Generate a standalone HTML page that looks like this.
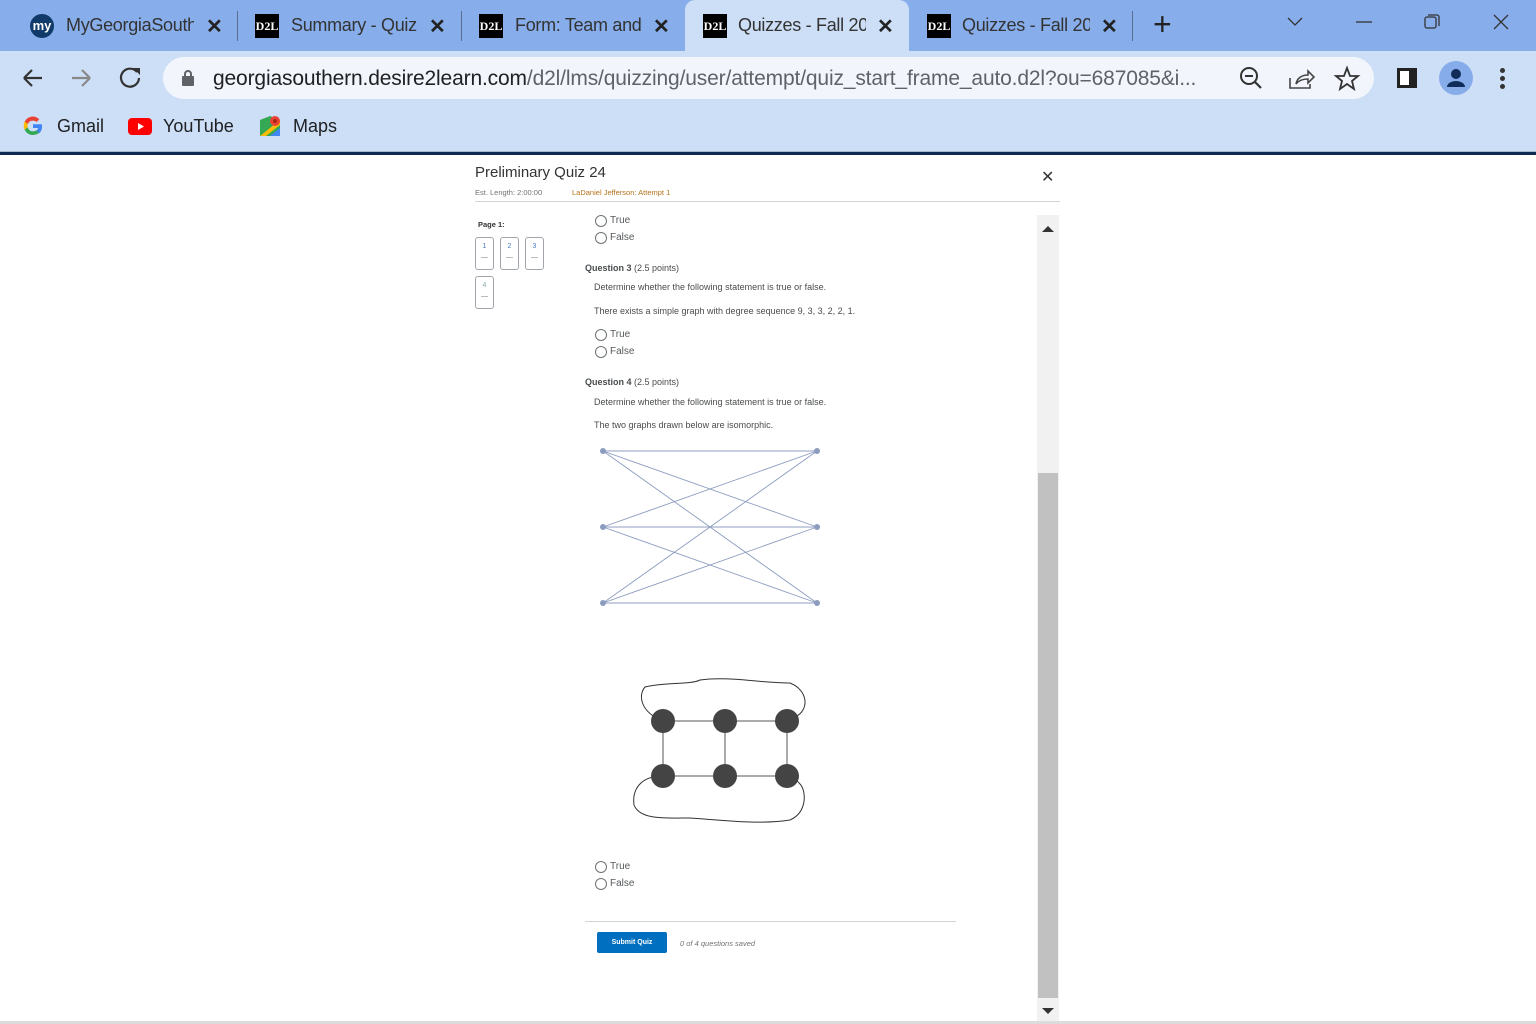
<!DOCTYPE html>
<html><head><meta charset="utf-8"><style>
*{margin:0;padding:0;box-sizing:border-box}
body{width:1536px;height:1024px;overflow:hidden;background:#fff;font-family:"Liberation Sans",sans-serif;position:relative}
.abs{position:absolute}
.tabbar{left:0;top:0;width:1536px;height:51px;background:#87adea}
.tab{position:absolute;top:0;height:51px;font-size:18px;color:#1f1f1f;display:flex;align-items:center}
.tab .t{position:absolute;left:56px;top:15px;width:128px;overflow:hidden;white-space:nowrap;color:#333;letter-spacing:-0.3px}
.tab .x{position:absolute;left:199px;top:14px;font-size:20px;font-weight:bold;color:#222}
.d2l{position:absolute;left:18px;top:14px;width:24px;height:24px;background:#000;color:#fff;font-family:"Liberation Serif",serif;font-weight:bold;font-size:12px;line-height:24px;text-align:center}
.sep{position:absolute;top:11px;width:1px;height:30px;background:#5a6f90}
.toolbar{left:0;top:51px;width:1536px;height:103px;background:#cddff6}
.omni{left:163px;top:57px;width:1211px;height:42px;border-radius:21px;background:#f2f6fc}
.url{left:213px;top:67px;font-size:21px;color:#202124;white-space:nowrap;letter-spacing:-0.15px}
.url span{color:#5f6368}
.bm{font-size:18px;color:#202124;top:116px}
.q{font-family:"Liberation Sans",sans-serif;color:#494c4e}
.radio{position:absolute;width:12px;height:12px;border:1px solid #6e7376;border-radius:50%}
.opt{position:absolute;font-size:10px;color:#565a5c}
.pg{position:absolute;width:19px;height:33px;border:1px solid #a0a6ac;border-radius:3px;font-size:7px;color:#4a7bc0;text-align:center;padding-top:5px}
.pg i{display:block;width:7px;height:1px;background:#bbb;margin:7px auto 0}
</style></head><body>
<div class="abs tabbar"></div>
<div class="tab" style="left:10px;width:225px">
 <div style="position:absolute;left:20px;top:14px;width:24px;height:24px;border-radius:50%;background:#0f3a6a;color:#fff;font-size:13px;font-weight:bold;text-align:center;line-height:23px">my</div>
 <div class="t" style="left:56px">MyGeorgiaSouth</div><div class="x" style="left:196px">✕</div></div>
<div class="sep" style="left:237px"></div>
<div class="tab" style="left:237px;width:225px"><div class="d2l">D2L</div><div class="t" style="left:54px">Summary - Quiz</div><div class="x" style="left:192px">✕</div></div>
<div class="sep" style="left:461px"></div>
<div class="tab" style="left:461px;width:225px"><div class="d2l">D2L</div><div class="t" style="left:54px">Form: Team and</div><div class="x" style="left:192px">✕</div></div>
<div class="tab" style="left:685px;width:224px;background:#cddff6;border-radius:10px 10px 0 0"><div class="d2l">D2L</div><div class="t" style="left:53px">Quizzes - Fall 20</div><div class="x" style="left:192px">✕</div></div>
<div class="tab" style="left:909px;width:225px"><div class="d2l">D2L</div><div class="t" style="left:53px">Quizzes - Fall 20</div><div class="x" style="left:192px">✕</div></div>
<div class="sep" style="left:1132px"></div>
<div class="abs" style="left:1153px;top:6px;font-size:32px;color:#222">+</div>
<svg class="abs" style="left:1280px;top:10px" width="240" height="30"><polyline points="8,8 15,15 22,8" fill="none" stroke="#333" stroke-width="1.3"/><line x1="76" y1="12" x2="92" y2="12" stroke="#333" stroke-width="1.3"/><rect x="145" y="7" width="11" height="11" rx="2" fill="none" stroke="#333" stroke-width="1.3"/><path d="M148 5h9a2 2 0 0 1 2 2v9" fill="none" stroke="#333" stroke-width="1.3"/><path d="M214 5l14 14M228 5l-14 14" stroke="#333" stroke-width="1.3"/></svg>
<div class="abs toolbar"></div>
<svg class="abs" style="left:20px;top:64px" width="130" height="28"><path d="M4 14h18M4 14l8-8M4 14l8 8" fill="none" stroke="#333" stroke-width="2.2"/><path d="M52 14h18M70 14l-8-8M70 14l-8 8" fill="none" stroke="#888" stroke-width="2.2"/><path d="M117 8a9 9 0 1 0 2 6" fill="none" stroke="#333" stroke-width="2.2"/><path d="M113 4h7v7z" fill="#333"/></svg>
<div class="abs omni"></div>
<svg class="abs" style="left:181px;top:69px" width="14" height="18"><rect x="1" y="7" width="12" height="10" rx="1" fill="#5f6368"/><path d="M4 8V5a3 3 0 0 1 6 0v3" fill="none" stroke="#5f6368" stroke-width="2"/></svg>
<div class="abs url">georgiasouthern.desire2learn.com<span>/d2l/lms/quizzing/user/attempt/quiz_start_frame_auto.d2l?ou=687085&amp;i...</span></div>
<svg class="abs" style="left:1238px;top:64px" width="130" height="30"><circle cx="11" cy="12" r="8" fill="none" stroke="#333" stroke-width="2"/><line x1="7" y1="12" x2="15" y2="12" stroke="#333" stroke-width="2"/><line x1="17" y1="18" x2="23" y2="24" stroke="#333" stroke-width="2.2"/><path d="M52 14v10h20v-4M58 20c1-6 6-9 12-9V7l6 6-6 6v-4c-5 0-9 1-12 5" fill="none" stroke="#444" stroke-width="1.6"/><path d="M109 4l3 8h8l-6 5 2 8-7-5-7 5 2-8-6-5h8z" fill="none" stroke="#333" stroke-width="1.8"/></svg>
<svg class="abs" style="left:1395px;top:66px" width="24" height="24"><rect x="2" y="2" width="20" height="20" fill="#222"/><rect x="5" y="5" width="9" height="14" fill="#fff"/></svg>
<div class="abs" style="left:1439px;top:61px;width:34px;height:34px;border-radius:50%;background:#86adea"></div>
<svg class="abs" style="left:1439px;top:61px" width="34" height="34"><circle cx="17" cy="13" r="5" fill="#0f2d58"/><path d="M8 26a9 6 0 0 1 18 0z" fill="#0f2d58"/></svg>
<div class="abs" style="left:1500px;top:68px;width:5px"><div style="width:5px;height:5px;border-radius:50%;background:#333;margin-bottom:3px"></div><div style="width:5px;height:5px;border-radius:50%;background:#333;margin-bottom:3px"></div><div style="width:5px;height:5px;border-radius:50%;background:#333"></div></div>
<svg class="abs" style="left:22px;top:115px" width="22" height="22" viewBox="0 0 22 22"><path d="M20 11.2c0-.7-.1-1.4-.2-2H11v3.8h5.1a4.4 4.4 0 0 1-1.9 2.9v2.4h3A9 9 0 0 0 20 11.2z" fill="#4285f4"/><path d="M11 20c2.5 0 4.6-.8 6.2-2.2l-3-2.4c-.8.6-1.900 1-3.200 1a5.6 5.6 0 0 1-5.2-3.900H2.7v2.500A9 9 0 0 0 11 20z" fill="#34a853"/><path d="M5.8 12.5a5.4 5.4 0 0 1 0-3.5V6.5H2.7a9 9 0 0 0 0 8.1z" fill="#fbbc05"/><path d="M11 5.6c1.4 0 2.6.5 3.6 1.4l2.7-2.7A9 9 0 0 0 2.7 6.5L5.8 9A5.4 5.4 0 0 1 11 5.6z" fill="#ea4335"/></svg>
<div class="abs bm" style="left:57px">Gmail</div>
<div class="abs" style="left:128px;top:118px;width:24px;height:17px;border-radius:4px;background:#f00"></div>
<svg class="abs" style="left:128px;top:118px" width="24" height="17"><path d="M10 5l6 3.5-6 3.5z" fill="#fff"/></svg>
<div class="abs bm" style="left:163px">YouTube</div>
<svg class="abs" style="left:258px;top:114px" width="24" height="24"><path d="M2 6l10-4 10 4v16H2z" fill="#34a853"/><path d="M2 22l20-16v5L8 22z" fill="#fbbc05"/><path d="M12 22l10-8v8z" fill="#4285f4"/><circle cx="17" cy="7" r="5" fill="#ea4335"/><circle cx="17" cy="7" r="2" fill="#a52714"/></svg>
<div class="abs bm" style="left:293px">Maps</div>
<div class="abs" style="left:0;top:152px;width:1536px;height:3px;background:#0e2a50"></div>
<div class="abs" style="left:0;top:151px;width:1536px;height:1px;background:#a9b6c8"></div>

<div class="abs q" style="left:475px;top:164px;font-size:15px;color:#333">Preliminary Quiz 24</div>
<div class="abs q" style="left:475px;top:188px;font-size:7.5px;color:#6e7376">Est. Length: 2:00:00</div>
<div class="abs q" style="left:572px;top:188px;font-size:7.5px;color:#b5721b">LaDaniel Jefferson: Attempt 1</div>
<div class="abs" style="left:1041px;top:167px;font-size:16px;color:#333">✕</div>
<div class="abs" style="left:475px;top:201px;width:585px;height:1px;background:#d0d4d8"></div>
<div class="abs q" style="left:478px;top:220px;font-size:7.5px;font-weight:bold;color:#333">Page 1:</div>
<div class="pg" style="left:475px;top:237px">1<i></i></div>
<div class="pg" style="left:500px;top:237px">2<i></i></div>
<div class="pg" style="left:525px;top:237px">3<i></i></div>
<div class="pg" style="left:475px;top:276px;color:#8aa">4<i></i></div>

<div class="radio" style="left:595px;top:215px"></div><div class="opt" style="left:610px;top:215px">True</div>
<div class="radio" style="left:595px;top:232px"></div><div class="opt" style="left:610px;top:232px">False</div>
<div class="abs q" style="left:585px;top:263px;font-size:9px"><b>Question 3</b> (2.5 points)</div>
<div class="abs q" style="left:594px;top:282px;font-size:9px">Determine whether the following statement is true or false.</div>
<div class="abs q" style="left:594px;top:306px;font-size:9px">There exists a simple graph with degree sequence 9, 3, 3, 2, 2, 1.</div>
<div class="radio" style="left:595px;top:329px"></div><div class="opt" style="left:610px;top:329px">True</div>
<div class="radio" style="left:595px;top:346px"></div><div class="opt" style="left:610px;top:346px">False</div>
<div class="abs q" style="left:585px;top:377px;font-size:9px"><b>Question 4</b> (2.5 points)</div>
<div class="abs q" style="left:594px;top:397px;font-size:9px">Determine whether the following statement is true or false.</div>
<div class="abs q" style="left:594px;top:420px;font-size:9px">The two graphs drawn below are isomorphic.</div>

<svg class="abs" style="left:0;top:0" width="1536" height="1024">
<g stroke="#8c9cbf" stroke-width="0.9">
<line x1="603" y1="451" x2="817" y2="451"/><line x1="603" y1="451" x2="817" y2="527"/><line x1="603" y1="451" x2="817" y2="603"/>
<line x1="603" y1="527" x2="817" y2="451"/><line x1="603" y1="527" x2="817" y2="527"/><line x1="603" y1="527" x2="817" y2="603"/>
<line x1="603" y1="603" x2="817" y2="451"/><line x1="603" y1="603" x2="817" y2="527"/><line x1="603" y1="603" x2="817" y2="603"/>
</g>
<g fill="#8c9cbf"><circle cx="603" cy="451" r="3"/><circle cx="817" cy="451" r="3"/><circle cx="603" cy="527" r="3"/><circle cx="817" cy="527" r="3"/><circle cx="603" cy="603" r="3"/><circle cx="817" cy="603" r="3"/></g>
<g fill="none" stroke="#333" stroke-width="1">
<path d="M663 721C640 712 638 695 645 687 665 682 690 685 700 680 730 676 760 683 790 683 808 690 810 710 795 717 790 720 788 721 787 721"/>
<path d="M663 776C640 776 632 790 634 805 640 820 665 818 690 818 720 820 760 825 790 820 808 812 806 790 800 784 795 778 790 776 787 776"/>
<path d="M663 721V776H787V721ZM725 721V776" stroke="#555"/>
</g>
<g fill="#444"><circle cx="663" cy="721" r="12"/><circle cx="725" cy="721" r="12"/><circle cx="787" cy="721" r="12"/><circle cx="663" cy="776" r="12"/><circle cx="725" cy="776" r="12"/><circle cx="787" cy="776" r="12"/></g>
</svg>

<div class="radio" style="left:595px;top:861px"></div><div class="opt" style="left:610px;top:861px">True</div>
<div class="radio" style="left:595px;top:878px"></div><div class="opt" style="left:610px;top:878px">False</div>
<div class="abs" style="left:585px;top:921px;width:371px;height:1px;background:#d0d4d8"></div>
<div class="abs" style="left:597px;top:932px;width:70px;height:21px;background:#006fbf;border-radius:2px;color:#fff;font-size:7px;font-weight:bold;text-align:center;line-height:21px">Submit Quiz</div>
<div class="abs q" style="left:680px;top:939px;font-size:7.5px;font-style:italic;color:#6e7376">0 of 4 questions saved</div>

<div class="abs" style="left:1037px;top:215px;width:22px;height:806px;background:#f1f1f1"></div>
<div class="abs" style="left:1038px;top:473px;width:20px;height:525px;background:#c1c1c1"></div>
<svg class="abs" style="left:1037px;top:220px" width="22" height="800"><path d="M5 12l6-6 6 6z" fill="#333"/><path d="M5 788l6 6 6-6z" fill="#333"/></svg>
<div class="abs" style="left:0;top:1021px;width:1536px;height:3px;background:#dcdcdc"></div>
</body></html>
